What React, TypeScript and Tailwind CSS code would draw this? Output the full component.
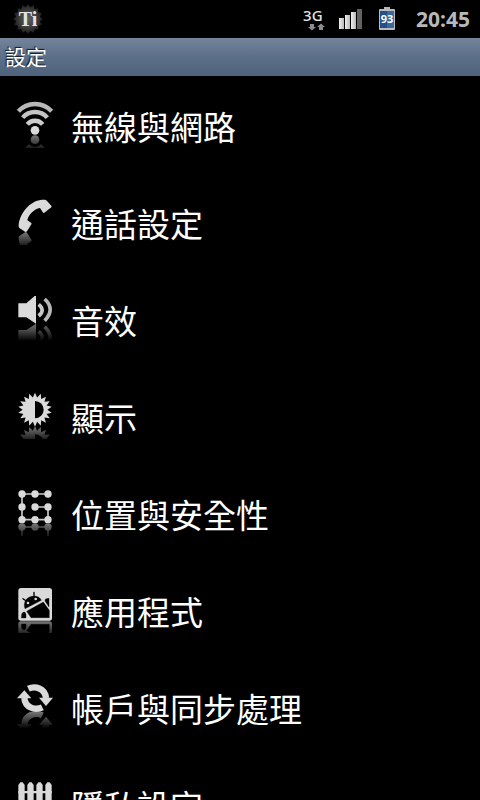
import { useId, type ReactNode } from "react";

const sunPoints = Array.from({ length: 36 }, (_, i) => {
  const r = i % 2 === 0 ? 51 : 37;
  const a = (i * Math.PI) / 18 - Math.PI / 2;
  return `${(72 + r * Math.cos(a)).toFixed(1)},${(56 + r * Math.sin(a)).toFixed(1)}`;
}).join(" ");

// Draws the glyph and its faded mirror image under the `base` line
function ReflectedIcon({ base, children }: { base: number; children: ReactNode }) {
  const id = useId();
  return (
    <svg viewBox="0 0 144 144" className="size-12 shrink-0" aria-hidden="true">
      <defs>
        <linearGradient id={`${id}fade`} gradientUnits="userSpaceOnUse" x1="0" y1={base} x2="0" y2={base + 52}>
          <stop offset="0" stopColor="#fff" stopOpacity="0.55" />
          <stop offset="1" stopColor="#fff" stopOpacity="0" />
        </linearGradient>
        <mask id={`${id}mask`} maskUnits="userSpaceOnUse" x="0" y="0" width="144" height="144">
          <rect y={base} width="144" height={144 - base} fill={`url(#${id}fade)`} />
        </mask>
      </defs>
      <g fill="#dadada">{children}</g>
      <g mask={`url(#${id}mask)`}>
        <g fill="#dadada" transform={`translate(0 ${base * 2}) scale(1 -1)`}>
          {children}
        </g>
      </g>
    </svg>
  );
}

const items = [
  {
    label: "無線與網路",
    base: 105,
    icon: (
      <>
        <g fill="none" strokeWidth="13">
          <path d="M22 34A68 68 0 0 1 122 34" stroke="#b8b8b8" />
          <path d="M35 53A49 49 0 0 1 109 53" stroke="#c4c4c4" />
          <path d="M49 73A30 30 0 0 1 95 73" stroke="#cccccc" />
        </g>
        <circle cx="72" cy="91" r="13" />
      </>
    ),
  },
  {
    label: "通話設定",
    base: 105,
    icon: (
      <path d="M92 8L102 8Q106 9 108 12L121 26Q123 28 121 31L100 47Q97 49 95 45L87 33C69 36 52 54 49 70L60 77Q63 79 61 82L48 103Q44 107 40 103L25 93Q22 90 23 84C26 50 55 12 92 8Z" />
    ),
  },
  {
    label: "音效",
    base: 89,
    icon: (
      <>
        <path d="M22 28H46L71 6H75V89L46 70H22Z" />
        <path d="M83 31Q104 49 83 66" fill="none" stroke="#c8c8c8" strokeWidth="11" />
        <path d="M101 15Q134 46 101 80" fill="none" stroke="#b8b8b8" strokeWidth="11" />
      </>
    ),
  },
  {
    label: "顯示",
    base: 106,
    icon: (
      <>
        <polygon points={sunPoints} />
        <path d="M72 30A26 26 0 0 1 72 82Z" fill="#000" />
      </>
    ),
  },
  {
    label: "位置與安全性",
    base: 106,
    icon: (
      <>
        <path d="M111 18H33V95H111V57H72" fill="none" stroke="#c8c8c8" strokeWidth="5" />
        {[18, 57, 95].map((y) =>
          [33, 72, 111].map((x) => <circle key={`${x}-${y}`} cx={x} cy={y} r="11" />)
        )}
      </>
    ),
  },
  {
    label: "應用程式",
    base: 108,
    icon: (
      <>
        <rect x="22" y="9" width="101" height="98" rx="8" />
        <g fill="#000" stroke="#000">
          <path d="M42 71C36 54 44 40 58 35C72 31 85 34 91 46Z" />
          <path d="M47 79L97 51L115 76V98H60Z" />
          <path d="M36 41L47 49M69 22V34" strokeWidth="4" strokeLinecap="round" fill="none" />
          <path d="M31 99L32 87Q36 79 42 82Q46 86 45 99Z" />
          <path d="M102 48Q101 42 106 41L114 40V66Z" />
        </g>
        <circle cx="51" cy="54" r="4" />
        <circle cx="74" cy="42" r="4" />
      </>
    ),
  },
  {
    label: "帳戶與同步處理",
    base: 88,
    icon: (
      <>
        <path d="M52 20C72 11 102 18 105 48" fill="none" stroke="#dadada" strokeWidth="19" />
        <path d="M84 47H126L105 72Z" />
        <path d="M94 76C74 86 42 78 40 48" fill="none" stroke="#dadada" strokeWidth="19" />
        <path d="M18 49H61L40 25Z" />
      </>
    ),
  },
  {
    label: "隱私設定",
    base: 106,
    icon: (
      <>
        {[22, 49, 76, 103].map((x) => (
          <path key={x} d={`M${x} 106V18L${x + 6} 10H${x + 13}L${x + 19} 18V106Z`} />
        ))}
        <path d="M22 36H122V43H22ZM22 80H122V87H22Z" />
      </>
    ),
  },
];

const gearPoints = Array.from({ length: 32 }, (_, i) => {
  const r = i % 2 === 0 ? 15 : 12;
  const a = (i * Math.PI) / 16 - Math.PI / 2;
  return `${(16 + r * Math.cos(a)).toFixed(1)},${(16 + r * Math.sin(a)).toFixed(1)}`;
}).join(" ");

function TitaniumIcon() {
  return (
    <div className="grid size-8 place-items-center">
      <svg viewBox="0 0 32 32" className="col-start-1 row-start-1 size-8" aria-hidden="true">
        <defs>
          <radialGradient id="gear">
            <stop offset="0" stopColor="#606060" />
            <stop offset="0.6" stopColor="#3c3c3c" />
            <stop offset="1" stopColor="#1c1c1c" />
          </radialGradient>
        </defs>
        <polygon points={gearPoints} fill="url(#gear)" />
      </svg>
      <span className="col-start-1 row-start-1 font-['Liberation_Serif',serif] text-xl leading-5 font-bold text-[#e4e4e4]">
        Ti
      </span>
    </div>
  );
}

function StatusBar() {
  return (
    <header className="flex h-[38px] shrink-0 items-center justify-between pr-2.5 pb-px pl-3 font-['Noto_Sans',sans-serif]">
      <TitaniumIcon />
      <div className="flex items-center">
        <div className="flex w-6 flex-col">
          <span className="text-[15px] leading-4 font-medium text-[#e4e4e4]">3G</span>
          <svg viewBox="0 0 24 8" className="h-2 w-6" fill="#8c8c8c" aria-hidden="true">
            <path d="M7 1H11V4H13L9 7.500L5 4H7ZM16 7V4H14L18 .5L22 4H20V7Z" />
          </svg>
        </div>
        <svg viewBox="0 0 23 20" className="ml-3 h-5 w-[23px]" aria-hidden="true">
          <defs>
            <linearGradient id="bar">
              <stop offset="0" stopColor="#f0f0f0" />
              <stop offset="1" stopColor="#b8b8b8" />
            </linearGradient>
          </defs>
          <path d="M0 9H5V20H0Z" fill="url(#bar)" />
          <path d="M6 6H11V20H6Z" fill="url(#bar)" />
          <path d="M12 3H17V20H12Z" fill="url(#bar)" />
          <path d="M18 0H23V20H18Z" fill="#626262" />
        </svg>
        <div className="ml-4 grid place-items-center">
          <svg viewBox="0 0 18 26" className="col-start-1 row-start-1 h-[26px] w-[18px]" aria-hidden="true">
            <path d="M6 1H12V4H6Z" fill="#b4b4b4" />
            <rect x="1" y="3" width="16" height="21" rx="1" fill="#b8bcc2" />
            <rect x="2" y="5" width="14" height="17" fill="#24508a" />
            <path d="M9 5H16V22H9Z" fill="#3c68a0" />
          </svg>
          <span className="col-start-1 row-start-1 text-[11px] leading-4 font-bold text-white">93</span>
        </div>
        <time className="ml-5 text-[21px] leading-6 font-bold text-[#b8b8b8]">20:45</time>
      </div>
    </header>
  );
}

export default function App() {
  return (
    <div className="flex h-screen flex-col overflow-hidden bg-black font-['Noto_Sans_CJK_TC',sans-serif] text-white">
      <StatusBar />
      <h1 className="h-[38px] shrink-0 bg-linear-to-b from-[#74849b] via-[#5c6f89] to-[#4e627c] pl-[5px] text-[21px] leading-9 [text-shadow:-1px_-1px_1px_#101820]">
        設定
      </h1>
      <main>
        <ul>
          {items.map(({ label, base, icon }) => (
            <li key={label} className="h-[97px]">
              <button type="button" className="flex h-24 w-full items-center gap-3 pl-[11px] text-left">
                <ReflectedIcon base={base}>{icon}</ReflectedIcon>
                <span className="pt-1 text-[33px] leading-10">{label}</span>
              </button>
            </li>
          ))}
        </ul>
      </main>
    </div>
  );
}
